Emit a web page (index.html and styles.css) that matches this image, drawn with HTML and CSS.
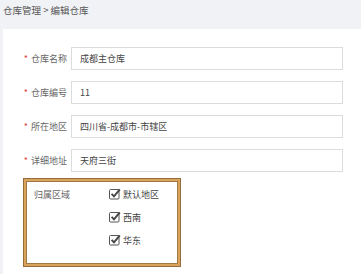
FILE: index.html
```html
<!DOCTYPE html>
<html lang="zh-CN">
<head>
  <meta charset="UTF-8" />
  <title>编辑仓库</title>
  <link rel="stylesheet" href="styles.css">
</head>
<body>

  <div class="crumb">仓库管理 &gt; 编辑仓库</div>

  <div class="panel">

    <!-- Base fields -->
    <div class="row">
      <label class="label"><span class="req">*</span>仓库名称</label>
      <div class="field">成都主仓库</div>
    </div>
    <div class="row">
      <label class="label"><span class="req">*</span>仓库编号</label>
      <div class="field">11</div>
    </div>
    <div class="row">
      <label class="label"><span class="req">*</span>所在地区</label>
      <div class="field">四川省-成都市-市辖区</div>
    </div>
    <div class="row">
      <label class="label"><span class="req">*</span>详细地址</label>
      <div class="field">天府三街</div>
    </div>

    <!-- Regions -->
    <div class="region-box">
      <div class="region-title">归属区域</div>
      <div class="checks">
        <div class="check">
          <svg viewBox="0 0 12 12" width="12" height="12"><rect x="0.5" y="1.5" width="9.5" height="9.5" rx="1" fill="#fff" stroke="#555" stroke-width="1"/><path d="M2.6 5.8 L5 8.4 L10.8 1.4" fill="none" stroke="#444" stroke-width="1.9"/></svg>
          <span>默认地区</span>
        </div>
        <div class="check">
          <svg viewBox="0 0 12 12" width="12" height="12"><rect x="0.5" y="1.5" width="9.5" height="9.5" rx="1" fill="#fff" stroke="#555" stroke-width="1"/><path d="M2.6 5.8 L5 8.4 L10.8 1.4" fill="none" stroke="#444" stroke-width="1.9"/></svg>
          <span>西南</span>
        </div>
        <div class="check">
          <svg viewBox="0 0 12 12" width="12" height="12"><rect x="0.5" y="1.5" width="9.5" height="9.5" rx="1" fill="#fff" stroke="#555" stroke-width="1"/><path d="M2.6 5.8 L5 8.4 L10.8 1.4" fill="none" stroke="#444" stroke-width="1.9"/></svg>
          <span>华东</span>
        </div>
      </div>
    </div>

  </div>

</body>
</html>
```

FILE: styles.css
```css
* { box-sizing: border-box; font-family: "Noto Sans CJK SC", "Noto Sans", sans-serif; }
body { margin: 0; background: #f0f2f5; color: #555; }

.crumb {
  height: 29px;
  padding: 3px 3px 0;
  font-size: 9.5px;
  color: #555;
}

.panel {
  background: #fff;
  margin-left: 3px;
  min-height: 245px;
  padding: 18px 0 0;
}

.row {
  display: flex;
  align-items: center;
  margin-bottom: 11px;
}
.label {
  width: 68px;
  padding-right: 4px;
  text-align: right;
  font-size: 9px;
  color: #666;
}
.req {
  color: #e04040;
  margin-right: 3px;
}
.field {
  width: 272px;
  height: 23px;
  border: 1px solid #dcdcdc;
  padding-left: 8px;
  display: flex;
  align-items: center;
  font-size: 9px;
  color: #444;
}

/* Region box */
.region-box {
  display: flex;
  width: 158px;
  height: 89px;
  margin: -5px 0 0 20px;
  padding: 9px 0 0 10px;
  border: 1px solid #946d3a;
  box-shadow: inset 0 0 0 2px #d9a35c, inset 0 0 0 3px #a07a45;
  font-size: 9px;
}
.region-title {
  width: 75px;
  color: #666;
}
.checks {
  display: flex;
  flex-direction: column;
  gap: 11px;
}
.check {
  display: flex;
  align-items: center;
  gap: 2px;
  color: #444;
  height: 12px;
}
```
